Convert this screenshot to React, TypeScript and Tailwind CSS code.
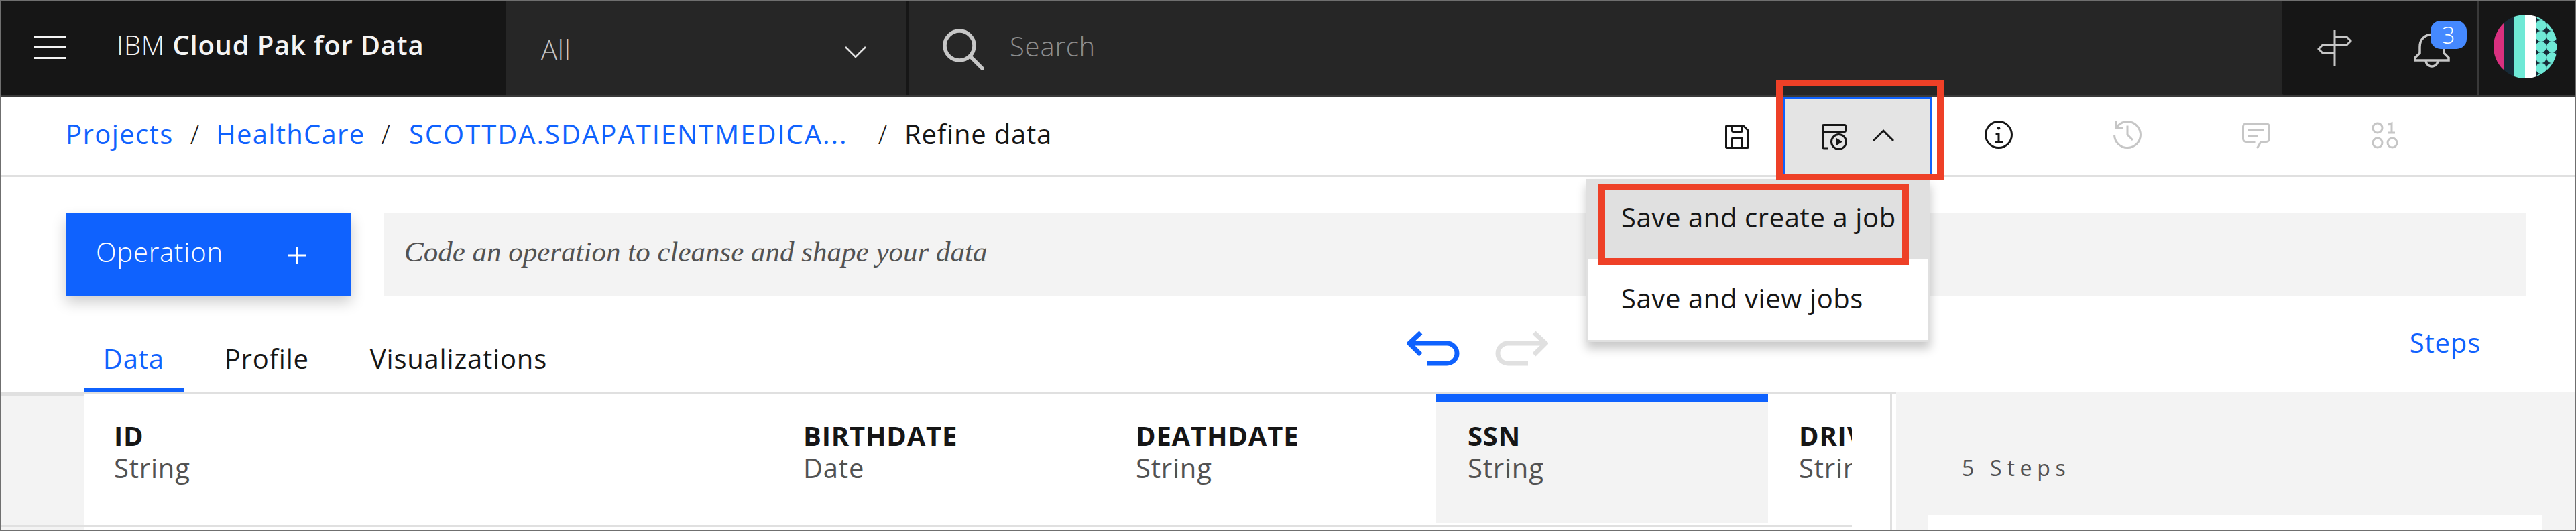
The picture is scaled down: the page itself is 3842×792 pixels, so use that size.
const Bar = () => <div className="w-[48px] h-[3px] bg-[#f4f4f4]" />;

function SaveIcon() {
  return (
    <svg width="48" height="48" viewBox="0 0 32 32" fill="#161616">
      <path d="M27.71,9.29l-5-5A1,1,0,0,0,22,4H6A2,2,0,0,0,4,6V26a2,2,0,0,0,2,2H26a2,2,0,0,0,2-2V10A1,1,0,0,0,27.71,9.29ZM12,6h8v4H12Zm8,20H12V18h8Zm2,0V18a2,2,0,0,0-2-2H12a2,2,0,0,0-2,2v8H6V6h4v4a2,2,0,0,0,2,2h8a2,2,0,0,0,2-2V6.41l4,4V26Z" />
    </svg>
  );
}

function JobIcon() {
  return (
    <svg width="40" height="40" viewBox="0 0 40 40" fill="none" stroke="#161616" strokeWidth="3">
      <rect x="1.5" y="1.5" width="34" height="10" rx="1.5" />
      <path d="M1.5 11 V34 Q1.5 36 3.5 36 H9" />
      <circle cx="25.5" cy="26.5" r="11" />
      <path d="M22 21 L31 26.5 L22 32 Z" fill="#161616" stroke="none" />
    </svg>
  );
}

function InfoIcon() {
  return (
    <svg width="48" height="48" viewBox="0 0 32 32" fill="#161616">
      <polygon points="17 22 17 14 13 14 13 16 15 16 15 22 12 22 12 24 20 24 20 22 17 22" />
      <path d="M16,8a1.5,1.5,0,1,0,1.5,1.5A1.5,1.5,0,0,0,16,8Z" />
      <path d="M16,30A14,14,0,1,1,30,16,14,14,0,0,1,16,30ZM16,4A12,12,0,1,0,28,16,12,12,0,0,0,16,4Z" />
    </svg>
  );
}

function HistoryIcon() {
  return (
    <svg width="48" height="48" viewBox="0 0 32 32" fill="#c6c6c6">
      <polygon points="20.59 22 15 16.41 15 7 17 7 17 15.58 22 20.59 20.59 22" />
      <path d="M16,2A13.94,13.94,0,0,0,6,6.23V2H4v8h8V8H7.08A12,12,0,1,1,4,16H2A14,14,0,1,0,16,2Z" />
    </svg>
  );
}

function CommentIcon() {
  return (
    <svg width="48" height="48" viewBox="0 0 32 32" fill="#c6c6c6">
      <path d="M17.74,30,16,29l4-7h6a2,2,0,0,0,2-2V8a2,2,0,0,0-2-2H6A2,2,0,0,0,4,8V20a2,2,0,0,0,2,2h9v2H6a4,4,0,0,1-4-4V8A4,4,0,0,1,6,4H26a4,4,0,0,1,4,4V20a4,4,0,0,1-4,4H21.16Z" />
      <rect x="8" y="10" width="16" height="2" />
      <rect x="8" y="16" width="10" height="2" />
    </svg>
  );
}

function BinaryIcon() {
  return (
    <svg width="42" height="42" viewBox="0 0 42 42" fill="none" stroke="#c6c6c6" strokeWidth="3">
      <circle cx="10" cy="10" r="7" />
      <path d="M26 5 L31 3 V17 M26 17 H36" />
      <circle cx="10" cy="32" r="7" />
      <circle cx="32" cy="32" r="7" />
    </svg>
  );
}

function Avatar() {
  const ys = [0, 16, 32, 48, 64, 80, 96];
  return (
    <svg width="95" height="95" viewBox="0 0 95 95">
      <defs>
        <clipPath id="avatar-clip">
          <circle cx="47.5" cy="47.5" r="47.5" />
        </clipPath>
      </defs>
      <g clipPath="url(#avatar-clip)">
        <rect x="0" y="0" width="16" height="95" fill="#d93080" />
        <rect x="16" y="0" width="15" height="95" fill="#172a37" />
        <rect x="31" y="0" width="16" height="95" fill="#6fe9d6" />
        <rect x="47" y="0" width="16" height="95" fill="#ffffff" />
        <rect x="63" y="0" width="32" height="95" fill="#172a37" />
        {ys.map((y) => (
          <g key={y}>
            <circle cx="71" cy={y} r="8" fill="#6fe9d6" />
            <circle cx="87" cy={y} r="8" fill="#6fe9d6" />
          </g>
        ))}
      </g>
    </svg>
  );
}

function Column({ name, type, className }: { name: string; type: string; className: string }) {
  return (
    <div className={className}>
      <div className="font-bold text-[#161616] leading-[48px] whitespace-nowrap">{name}</div>
      <div className="text-[#525252] leading-[48px] whitespace-nowrap">{type}</div>
    </div>
  );
}

export default function App() {
  return (
    <div className="relative w-[3842px] h-[792px] overflow-hidden border-2 border-[#6f6f6f] bg-white text-[40px] tracking-[0.8px] [font-family:'Open_Sans',sans-serif]">
      {/* Top bar */}
      <header className="flex h-[142px] border-b-[3px] border-[#393939] bg-[#262626]">
        <div className="flex w-[753px] items-center bg-[#161616] pl-[48px] pb-[2px]">
          <div className="flex flex-col gap-[13px]">
            <Bar />
            <Bar />
            <Bar />
          </div>
          <div className="ml-[76px] mb-[8px] whitespace-nowrap leading-[48px] text-[#f4f4f4]">
            <span className="font-light">IBM </span>
            <span className="font-semibold">Cloud Pak for Data</span>
          </div>
        </div>
        <div className="flex w-[600px] items-center justify-between border-r-[3px] border-[#161616] pl-[52px] pr-[60px]">
          <span className="font-light text-[#c6c6c6] leading-[48px] mt-[4px]">All</span>
          <svg width="32" height="20" viewBox="0 0 32 20" fill="none" stroke="#e0e0e0" strokeWidth="2.6" className="mt-[12px]">
            <path d="M1 2 L16 17 L31 2" />
          </svg>
        </div>
        <div className="flex flex-1 items-center pl-[51px]">
          <svg width="62" height="62" viewBox="0 0 62 62" fill="none" stroke="#c6c6c6" strokeWidth="5.5" className="mt-[4px]">
            <circle cx="25" cy="25" r="22" />
            <path d="M41 41 L59 59" strokeLinecap="round" />
          </svg>
          <span className="ml-[38px] mb-[6px] font-light text-[#8d8d8d]">Search</span>
        </div>
        <div className="flex w-[437px] rounded-bl-[4px] bg-[#161616]">
          <div className="flex w-[295px] items-center border-r-[3px] border-[#393939]">
            <svg width="52" height="54" viewBox="0 0 52 54" fill="none" stroke="#c6c6c6" strokeWidth="3" className="ml-[53px] mt-[1px]">
              <path d="M26 0 V53" />
              <path d="M26 10 H44 L50 16 L44 22 H8 L2 28 L8 34 H26" />
            </svg>
            <div className="relative ml-[92px] mt-[8px]">
              <svg width="54" height="56" viewBox="0 0 54 56" fill="none" stroke="#c6c6c6" strokeWidth="3.5">
                <path d="M2 42 V38 L9 31 V22 C9 10 17 3.5 27 3.5 C37 3.5 45 10 45 22 V31 L52 38 V42 Z" />
                <path d="M18 42 a9 9 0 0 0 18 0" />
              </svg>
              <div className="absolute left-[25px] top-[-17px] flex h-[42px] w-[54px] items-center justify-center rounded-[15px] bg-[#4589ff] text-[34px] font-light leading-none text-white">
                3
              </div>
            </div>
          </div>
          <div className="flex flex-1 items-center pl-[21px] pb-[5px]">
            <Avatar />
          </div>
        </div>
      </header>

      {/* Breadcrumb and toolbar */}
      <nav className="flex h-[120px] items-stretch border-b-[3px] border-[#e0e0e0]">
        <div className="flex items-center pl-[96px] pb-[6px] whitespace-nowrap">
          <a className="text-[#0f62fe] tracking-[1.4px]">Projects</a>
          <span className="ml-[25px] text-[#161616] font-light">/</span>
          <a className="ml-[24px] text-[#0f62fe] tracking-[1.3px]">HealthCare</a>
          <span className="ml-[24px] text-[#161616] font-light">/</span>
          <a className="ml-[27px] text-[#0f62fe] tracking-[2px]">SCOTTDA.SDAPATIENTMEDICA...</a>
          <span className="ml-[45px] text-[#161616] font-light">/</span>
          <span className="ml-[25px] text-[#161616]">Refine data</span>
        </div>
        <div className="ml-auto flex items-stretch pr-[187px]">
          <div className="flex w-[138px] items-center justify-center pt-[3px]">
            <SaveIcon />
          </div>
          <div className="flex w-[222px] items-center border-x-[3px] border-t-[3px] border-[#0f62fe] bg-[#e4e4e4] pl-[54px] pt-[2px]">
            <JobIcon />
            <svg width="32" height="20" viewBox="0 0 32 20" fill="none" stroke="#161616" strokeWidth="3" className="ml-[36px] mt-[-6px]">
              <path d="M1 18 L16 3 L31 18" />
            </svg>
          </div>
          <div className="ml-[3px] flex w-[192px] items-center justify-center pb-[3px]"><InfoIcon /></div>
          <div className="flex w-[192px] items-center justify-center pb-[3px]"><HistoryIcon /></div>
          <div className="flex w-[192px] items-center justify-center pb-[3px]"><CommentIcon /></div>
          <div className="flex w-[192px] items-center justify-center pb-[1px]"><BinaryIcon /></div>
        </div>
      </nav>

      {/* Operation row */}
      <section className="flex gap-[48px] pl-[96px] pt-[54px]">
        <button className="flex h-[123px] w-[426px] items-center justify-between bg-[#0f62fe] pl-[45px] pr-[68px] pb-[8px] text-white font-light shadow-[0_10px_20px_rgba(0,0,0,0.2)]">
          <span>Operation</span>
          <svg width="26" height="26" viewBox="0 0 26 26" stroke="#ffffff" strokeWidth="3" className="mt-[10px]">
            <path d="M13 0 V26 M0 13 H26" />
          </svg>
        </button>
        <div className="flex h-[123px] w-[3195px] items-center bg-[#f3f3f3] pl-[31px] pb-[6px] text-[43px] italic tracking-normal text-[#525252] [font-family:'Liberation_Serif',serif]">
          Code an operation to cleanse and shape your data
        </div>
      </section>

      {/* Tabs row */}
      <section className="flex h-[147px] border-b-[3px] border-[#e0e0e0]">
        <div className="ml-[123px] flex w-[691px] items-stretch">
          <div className="flex w-[150px] justify-center border-b-[6px] border-[#0f62fe] pt-[64px] text-[#0f62fe]">Data</div>
          <div className="ml-[61px] pt-[64px] text-[#161616]">Profile</div>
          <div className="ml-[91px] pt-[64px] text-[#161616]">Visualizations</div>
        </div>
        <div className="ml-[1282px] flex items-start gap-[53px] pt-[52px]">
          <svg width="79" height="53" viewBox="0 0 79 53" fill="none" stroke="#0f62fe" strokeWidth="7">
            <path d="M21 3 L4 19 L21 36" />
            <path d="M4 19 H60 a15 15 0 0 1 0 30 H30" />
          </svg>
          <svg width="79" height="53" viewBox="0 0 79 53" fill="none" stroke="#e0e0e0" strokeWidth="7">
            <path d="M58 3 L75 19 L58 36" />
            <path d="M75 19 H19 a15 15 0 0 0 0 30 H49" />
          </svg>
        </div>
        <div className="ml-auto mr-[140px] pt-[40px] text-[#0f62fe]">Steps</div>
      </section>

      {/* Data area */}
      <main className="flex h-[202px]">
        <div className="flex w-[123px] flex-col bg-[#f3f3f3]">
          <div className="h-[3px] bg-[#e0e0e0]" />
          <div className="mt-[192px] h-[3px] bg-[#e0e0e0]" />
        </div>
        <div className="flex w-[2637px] flex-col">
          <div className="flex h-[192px] overflow-hidden">
            <Column name="ID" type="String" className="w-[1030px] pl-[45px] pt-[38px]" />
            <Column name="BIRTHDATE" type="Date" className="w-[494px] pl-[43px] pt-[38px]" />
            <Column name="DEATHDATE" type="String" className="w-[493px] pl-[45px] pt-[38px]" />
            <Column name="SSN" type="String" className="w-[495px] border-t-[12px] border-[#0f62fe] bg-[#f3f3f3] pl-[47px] pt-[26px]" />
            <Column name="DRIVER" type="String" className="w-[125px] overflow-hidden pl-[46px] pt-[38px]" />
          </div>
          <div className="mt-[3px] h-[3px] bg-[#e0e0e0]" />
        </div>
        <div className="w-[60px] border-r-[3px] border-[#e0e0e0]" />
        <div className="w-[6px]" />
        <aside className="mt-[-3px] flex-1 bg-[#f3f3f3] pl-[48px] pt-[93px]">
          <div className="ml-[50px] text-[32px] leading-[40px] text-[#525252] tracking-[7.75px]">5 Steps</div>
          <div className="mt-[50px] h-[40px] w-[915px] bg-white" />
        </aside>
      </main>

      {/* Dropdown menu, over the page */}
      <div className="absolute left-[2364px] top-[265px] h-[243px] w-[513px] border-[3px] border-[#e0e0e0] bg-white text-[#161616] tracking-[0.6px] shadow-[0_10px_14px_rgba(0,0,0,0.22)]">
        <div className="h-[117px] bg-[#e0e0e0] pl-[49px] pt-[34px] leading-[40px]">Save and create a job</div>
        <div className="h-[120px] pl-[49px] pt-[38px] leading-[40px]">Save and view jobs</div>
      </div>

      {/* Red highlight annotations */}
      <div className="absolute left-[2647px] top-[117px] h-[150px] w-[250px] border-[10px] border-[#ee4027]" />
      <div className="absolute left-[2382px] top-[272px] h-[121px] w-[463px] border-[10px] border-[#ee4027]" />
    </div>
  );
}
